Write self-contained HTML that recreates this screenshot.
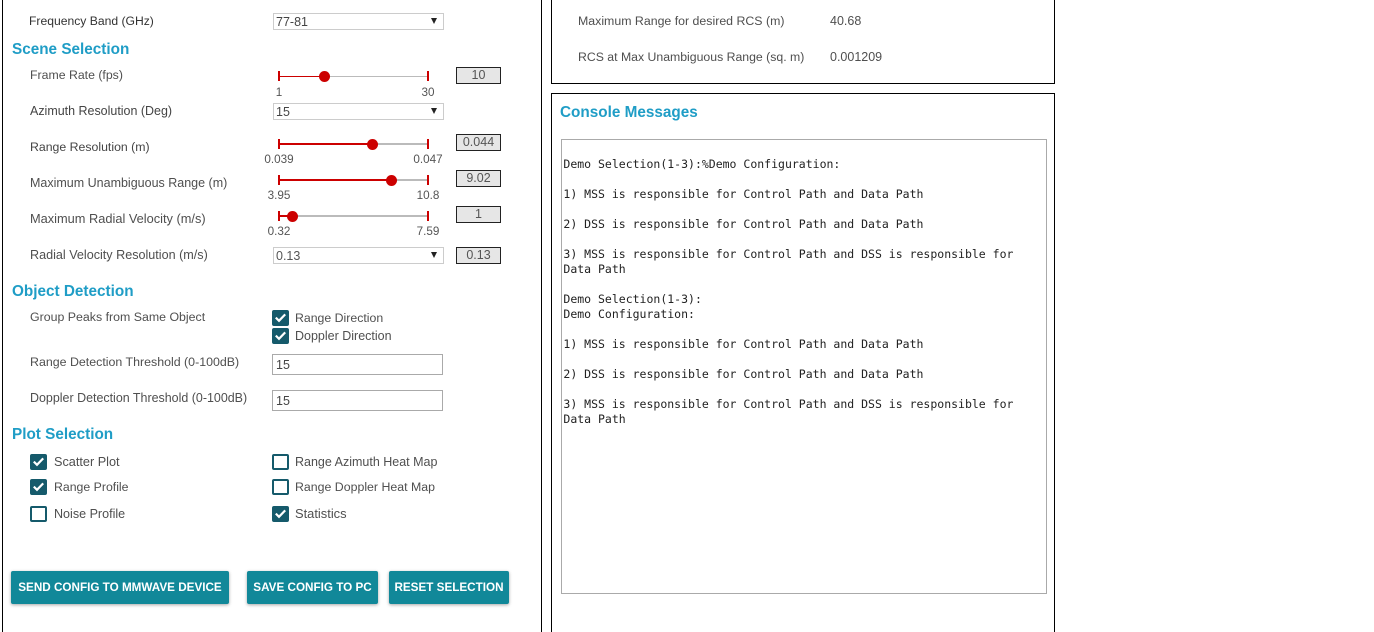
<!DOCTYPE html>
<html><head><meta charset="utf-8"><style>
html,body{margin:0;padding:0;background:#fff;width:1374px;height:632px;overflow:hidden}
body{position:relative;font-family:"Liberation Sans",sans-serif;font-size:12.5px;color:#4f4f4f}
.a{position:absolute}
.t{position:absolute;white-space:nowrap;line-height:16px}
.h{position:absolute;white-space:nowrap;line-height:20px;font-size:15.3px;font-weight:bold;color:#1f9dc6}
.s{position:absolute;box-sizing:border-box;width:171px;height:17px;border:1px solid #ccc;line-height:17px;padding-left:2px;font-size:12.5px;color:#444}
.s:after{content:"";position:absolute;right:6px;top:4px;border-left:3px solid transparent;border-right:3px solid transparent;border-top:6px solid #222}
.b{position:absolute;box-sizing:border-box;left:456px;width:45px;height:17px;background:#e6e6e6;border:1px solid #222;text-align:center;line-height:15px;color:#555;font-size:12.5px}
.i{position:absolute;box-sizing:border-box;left:272px;width:171px;height:21px;border:1px solid #aaa;line-height:20px;padding-left:3px;color:#444}
.tr{position:absolute;left:279px;width:149px;height:2px;background:#bbb}
.fl{position:absolute;left:279px;height:2px;background:#c00}
.k{position:absolute;width:2px;height:10px;background:#c00}
.d{position:absolute;width:11px;height:11px;border-radius:50%;background:#c00}
.l{position:absolute;font-size:11.7px;line-height:14px;margin-top:1px;white-space:nowrap;transform:translateX(-50%);color:#555}
.c{position:absolute;box-sizing:border-box;width:17px;height:16px;border:2px solid #155a6b;border-radius:2px;background:#fff}
.c.on{background:#155a6b}
.c svg{position:absolute;left:0;top:0}
.btn{position:absolute;top:571px;height:33px;background:#118899;border-radius:2px;box-shadow:0 1px 3px rgba(0,0,0,.35);color:#fff;font-size:11.7px;font-weight:bold;line-height:33px;text-align:center;white-space:nowrap}
pre{position:absolute;margin:0;left:563.4px;top:157px;font-family:"DejaVu Sans Mono",monospace;font-size:11.5px;line-height:15px;color:#222}
</style></head><body>
<div class="a" style="left:2px;top:0;width:1px;height:632px;background:#000"></div>
<div class="a" style="left:541px;top:0;width:1px;height:632px;background:#000"></div>
<div class="a" style="left:551px;top:-2px;width:504px;height:86px;box-sizing:border-box;border:1px solid #000"></div>
<div class="a" style="left:551px;top:93px;width:504px;height:545px;box-sizing:border-box;border:1px solid #000"></div>

<div class="t" style="left:29px;top:13px;color:#333;font-size:12.15px">Frequency Band (GHz)</div>
<div class="s" style="left:273px;top:13px">77-81</div>
<div class="h" style="left:12px;top:40px">Scene Selection</div>

<div class="t" style="left:30px;top:67px;font-size:12.3px">Frame Rate (fps)</div>
<div class="tr" style="top:76px;height:1px"></div><div class="fl" style="top:76px;height:1px;width:45px"></div>
<div class="k" style="left:278px;top:71px"></div><div class="k" style="left:427px;top:71px"></div>
<div class="d" style="left:319px;top:71px"></div>
<div class="l" style="left:279px;top:85px">1</div><div class="l" style="left:428px;top:85px">30</div>
<div class="b" style="top:67px">10</div>

<div class="t" style="left:30px;top:103px;color:#444;font-size:12.47px">Azimuth Resolution (Deg)</div>
<div class="s" style="left:273px;top:103px">15</div>

<div class="t" style="left:30px;top:139px;color:#444;font-size:12.3px">Range Resolution (m)</div>
<div class="tr" style="top:143px"></div><div class="fl" style="top:143px;width:93px"></div>
<div class="k" style="left:278px;top:139px"></div><div class="k" style="left:427px;top:139px"></div>
<div class="d" style="left:367px;top:139px"></div>
<div class="l" style="left:279px;top:152px">0.039</div><div class="l" style="left:428px;top:152px">0.047</div>
<div class="b" style="top:134px">0.044</div>

<div class="t" style="left:30px;top:175px">Maximum Unambiguous Range (m)</div>
<div class="tr" style="top:179px"></div><div class="fl" style="top:179px;width:112px"></div>
<div class="k" style="left:278px;top:175px"></div><div class="k" style="left:427px;top:175px"></div>
<div class="d" style="left:386px;top:175px"></div>
<div class="l" style="left:279px;top:188px">3.95</div><div class="l" style="left:428px;top:188px">10.8</div>
<div class="b" style="top:170px">9.02</div>

<div class="t" style="left:30px;top:211px;font-size:12.8px">Maximum Radial Velocity (m/s)</div>
<div class="tr" style="top:215px"></div><div class="fl" style="top:215px;width:13px"></div>
<div class="k" style="left:278px;top:211px"></div><div class="k" style="left:427px;top:211px"></div>
<div class="d" style="left:287px;top:211px"></div>
<div class="l" style="left:279px;top:224px">0.32</div><div class="l" style="left:428px;top:224px">7.59</div>
<div class="b" style="top:206px">1</div>

<div class="t" style="left:30px;top:247px;font-size:12.6px">Radial Velocity Resolution (m/s)</div>
<div class="s" style="left:273px;top:247px;color:#555">0.13</div>
<div class="b" style="top:247px">0.13</div>

<div class="h" style="left:12px;top:282px">Object Detection</div>
<div class="t" style="left:30px;top:309px;font-size:12.36px">Group Peaks from Same Object</div>
<div class="c on" style="left:272px;top:310px"><svg width="13" height="12"><path d="M1.8 5.6L5 8.8L11.2 2.4" fill="none" stroke="#fff" stroke-width="2.2"/></svg></div>
<div class="t" style="left:295px;top:310px;font-size:12.3px">Range Direction</div>
<div class="c on" style="left:272px;top:328px"><svg width="13" height="12"><path d="M1.8 5.6L5 8.8L11.2 2.4" fill="none" stroke="#fff" stroke-width="2.2"/></svg></div>
<div class="t" style="left:295px;top:328px">Doppler Direction</div>

<div class="t" style="left:30px;top:354px;font-size:12.4px">Range Detection Threshold (0-100dB)</div>
<div class="i" style="top:354px">15</div>
<div class="t" style="left:30px;top:390px;font-size:12.46px">Doppler Detection Threshold (0-100dB)</div>
<div class="i" style="top:390px">15</div>

<div class="h" style="left:12px;top:425px">Plot Selection</div>
<div class="c on" style="left:30px;top:454px"><svg width="13" height="12"><path d="M1.8 5.6L5 8.8L11.2 2.4" fill="none" stroke="#fff" stroke-width="2.2"/></svg></div>
<div class="t" style="left:54px;top:454px;font-size:12.7px">Scatter Plot</div>
<div class="c on" style="left:30px;top:479px"><svg width="13" height="12"><path d="M1.8 5.6L5 8.8L11.2 2.4" fill="none" stroke="#fff" stroke-width="2.2"/></svg></div>
<div class="t" style="left:54px;top:479px;font-size:12.3px">Range Profile</div>
<div class="c" style="left:30px;top:506px"></div>
<div class="t" style="left:54px;top:506px;font-size:12.56px">Noise Profile</div>
<div class="c" style="left:272px;top:454px"></div>
<div class="t" style="left:295px;top:454px">Range Azimuth Heat Map</div>
<div class="c" style="left:272px;top:479px"></div>
<div class="t" style="left:295px;top:479px;font-size:12.35px">Range Doppler Heat Map</div>
<div class="c on" style="left:272px;top:506px"><svg width="13" height="12"><path d="M1.8 5.6L5 8.8L11.2 2.4" fill="none" stroke="#fff" stroke-width="2.2"/></svg></div>
<div class="t" style="left:295px;top:506px;font-size:12.9px">Statistics</div>

<div class="btn" style="left:11px;width:218px">SEND CONFIG TO MMWAVE DEVICE</div>
<div class="btn" style="left:247px;width:131px">SAVE CONFIG TO PC</div>
<div class="btn" style="left:389px;width:120px">RESET SELECTION</div>

<div class="t" style="left:578px;top:13px;font-size:12.35px">Maximum Range for desired RCS (m)</div>
<div class="t" style="left:830px;top:13px">40.68</div>
<div class="t" style="left:578px;top:49px;font-size:12.28px">RCS at Max Unambiguous Range (sq. m)</div>
<div class="t" style="left:830px;top:49px">0.001209</div>

<div class="h" style="left:560px;top:103px">Console Messages</div>
<div class="a" style="left:561px;top:139px;width:486px;height:455px;box-sizing:border-box;border:1px solid #aaa"></div>
<pre>Demo Selection(1-3):%Demo Configuration:

1) MSS is responsible for Control Path and Data Path

2) DSS is responsible for Control Path and Data Path

3) MSS is responsible for Control Path and DSS is responsible for
Data Path

Demo Selection(1-3):
Demo Configuration:

1) MSS is responsible for Control Path and Data Path

2) DSS is responsible for Control Path and Data Path

3) MSS is responsible for Control Path and DSS is responsible for
Data Path</pre>
</body></html>
